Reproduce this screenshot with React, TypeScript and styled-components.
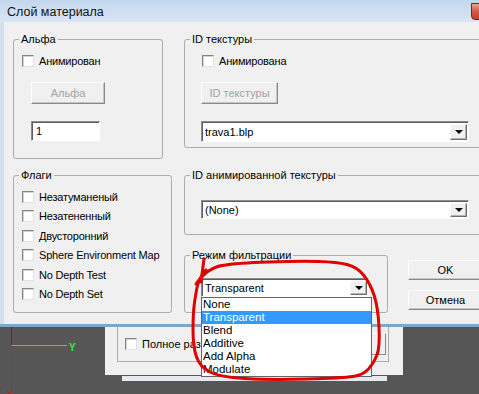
import React from "react";
import styled, { createGlobalStyle } from "styled-components";

const GlobalStyle = createGlobalStyle`
  html, body {
    margin: 0;
    padding: 0;
  }
  body {
    background: #565656;
    font-family: "Liberation Sans", Arial, sans-serif;
    font-size: 11px;
    color: #000;
  }
`;

const Screen = styled.div`
  position: relative;
  width: 479px;
  height: 394px;
  overflow: hidden;
  background: #565656;
`;

const Window = styled.div`
  width: 520px;
  background: #f0f0f0;
  border-bottom: 3px solid #7ea8c8;
`;

const TitleBar = styled.header`
  display: flex;
  align-items: flex-start;
  height: 22px;
  background: linear-gradient(#c2d7ed, #d9e7f5);
  color: #111;
`;

const Title = styled.h1`
  margin: 0;
  padding: 5px 0 0 7px;
  font-size: 12.5px;
  font-weight: normal;
  line-height: 15px;
`;

const CloseButton = styled.button`
  margin: 3px 6px 0 auto;
  width: 43px;
  height: 17px;
  padding: 0;
  border: 1px solid #6d2a22;
  border-radius: 0 0 4px 4px;
  background: linear-gradient(#eaa594, #d05a46 50%, #c23f2d);
`;

const Body = styled.main`
  box-sizing: border-box;
  display: flex;
  height: 302px;
  padding: 11px 0 0 9px;
  border-left: 4px solid #d3e1ef;
`;

const LeftColumn = styled.div`
  display: flex;
  flex-direction: column;
  gap: 10px;
  width: 159px;
`;

const RightColumn = styled.div`
  display: flex;
  flex-direction: column;
  width: 300px;
  margin-left: 12px;
`;

const Group = styled.fieldset<{ $w: number; $h: number; $pl: number; $mt?: number }>`
  box-sizing: border-box;
  display: flex;
  flex-direction: column;
  align-items: flex-start;
  width: ${(p) => p.$w}px;
  height: ${(p) => p.$h}px;
  min-width: 0;
  margin: ${(p) => p.$mt ?? 0}px 0 0 0;
  padding: 0 8px 0 ${(p) => p.$pl}px;
  border: 1px solid #adadad;
  border-radius: 3px;
`;

const Legend = styled.legend<{ $pl: number }>`
  margin-left: ${(p) => 5 - p.$pl}px;
  padding: 0 2px;
  font-size: 11px;
  line-height: 13px;
`;

const CheckRow = styled.label<{ $mt?: number; $ml?: number }>`
  display: flex;
  align-items: center;
  gap: 5px;
  height: 13px;
  margin: ${(p) => p.$mt ?? 0}px 0 0 ${(p) => p.$ml ?? 0}px;
  white-space: nowrap;
  font-size: 11px;
  letter-spacing: -0.2px;
`;

const Box = styled.span`
  box-sizing: border-box;
  flex: none;
  width: 12px;
  height: 12px;
  background: #fff;
  border: 1px solid;
  border-color: #848484 #e2e2e2 #e2e2e2 #848484;
  box-shadow: inset 1px 1px 0 #d4d4d4;
`;

const FlagList = styled.div`
  display: flex;
  flex-direction: column;
  gap: 6.4px;
  margin-top: 8.5px;
`;

const PushButton = styled.button<{ $w: number; $h: number; $mt?: number; $ml?: number; $disabled?: boolean }>`
  box-sizing: border-box;
  width: ${(p) => p.$w}px;
  height: ${(p) => p.$h}px;
  margin: ${(p) => p.$mt ?? 0}px 0 0 ${(p) => p.$ml ?? 0}px;
  padding: 0;
  background: #f0f0f0;
  border: 1px solid;
  border-color: #fdfdfd #8a8a8a #8a8a8a #fdfdfd;
  box-shadow: inset -1px -1px 0 #c6c6c6;
  font-family: "Liberation Sans", Arial, sans-serif;
  font-size: 11px;
  color: ${(p) => (p.$disabled ? "#a3a3a3" : "#000")};
`;

const TextField = styled.div<{ $w: number; $mt?: number; $ml?: number }>`
  box-sizing: border-box;
  width: ${(p) => p.$w}px;
  height: 20px;
  margin: ${(p) => p.$mt ?? 0}px 0 0 ${(p) => p.$ml ?? 0}px;
  padding: 2px 0 0 4px;
  background: #fff;
  border: 1px solid;
  border-color: #8c8c8c #fff #fff #8c8c8c;
  box-shadow: inset 1px 1px 0 #5e5e5e;
  font-size: 11px;
  line-height: 14px;
`;

const SelectWrap = styled.div<{ $mt: number }>`
  position: relative;
  margin-top: ${(p) => p.$mt}px;
`;

const Select = styled.div<{ $w: number; $h: number }>`
  box-sizing: border-box;
  display: flex;
  align-items: center;
  width: ${(p) => p.$w}px;
  height: ${(p) => p.$h}px;
  padding: 0 1px 0 0;
  background: #fff;
  border: 1px solid;
  border-color: #8c8c8c #fff #fff #8c8c8c;
  box-shadow: inset 1px 1px 0 #5e5e5e;
  font-size: 11px;
`;

const SelectValue = styled.span`
  flex: 1;
  padding-left: 3px;
  white-space: nowrap;
`;

const Arrow = styled.span`
  box-sizing: border-box;
  display: flex;
  align-items: center;
  justify-content: center;
  width: 17px;
  height: calc(100% - 3px);
  margin-top: 1px;
  background: #f0f0f0;
  border: 1px solid;
  border-color: #fdfdfd #6e6e6e #6e6e6e #fdfdfd;
  box-shadow: inset -1px -1px 0 #b4b4b4;
  &::after {
    content: "";
    border-left: 4px solid transparent;
    border-right: 4px solid transparent;
    border-top: 4px solid #000;
  }
`;

const DropList = styled.ul`
  position: absolute;
  top: 100%;
  left: 0;
  z-index: 5;
  box-sizing: border-box;
  width: 171px;
  margin: 0;
  padding: 0;
  list-style: none;
  background: #fff;
  border: 1px solid #646464;
`;

const DropItem = styled.li<{ $active?: boolean }>`
  height: 13px;
  padding-left: 1px;
  font-size: 11.5px;
  line-height: 13px;
  background: ${(p) => (p.$active ? "#3399ff" : "#fff")};
  color: ${(p) => (p.$active ? "#fff" : "#000")};
`;

const BottomRow = styled.div`
  display: flex;
  margin-top: 14px;
`;

const ButtonColumn = styled.div`
  display: flex;
  flex-direction: column;
  gap: 10px;
  margin: 11px 0 0 20px;
`;

const Viewport = styled.section`
  display: flex;
  height: 67px;
  background: #565656;
`;

const BackWindow = styled.div`
  display: flex;
  flex-direction: column;
  width: 298px;
`;

const BackPanel = styled.div`
  box-sizing: border-box;
  height: 48px;
  padding-left: 12px;
  background: #f0f0f0;
`;

const BackGroup = styled.div`
  box-sizing: border-box;
  display: flex;
  align-items: center;
  gap: 5px;
  width: 272px;
  height: 35px;
  padding: 0 2px 0 7px;
  border: 1px solid #adadad;
  border-top: none;
  font-size: 11px;
  white-space: nowrap;
`;

const BackButton = styled.span`
  box-sizing: border-box;
  flex: none;
  width: 86px;
  height: 22px;
  margin-left: auto;
  background: #f0f0f0;
  border: 1px solid;
  border-color: #fdfdfd #8a8a8a #8a8a8a #fdfdfd;
`;

const BackStrip = styled.div`
  width: 265px;
  height: 5px;
  margin: 1px 0 0 17px;
  background: #e6eaee;
`;

const Marker = styled.svg`
  position: absolute;
  inset: 0;
  z-index: 10;
  pointer-events: none;
`;

const loop: [number, number][] = [
  [196, 284], [207, 268], [237, 263], [300, 261], [337, 262], [357, 267],
  [370, 283], [378, 307], [380, 347], [374, 363], [363, 375], [343, 378],
  [270, 380], [220, 377], [200, 367], [193, 347], [193, 313], [196, 292],
  [199, 279], [206, 270],
];

function smoothPath(pts: [number, number][]) {
  let d = `M ${pts[0][0]} ${pts[0][1]}`;
  for (let i = 1; i < pts.length - 1; i++) {
    const mx = (pts[i][0] + pts[i + 1][0]) / 2;
    const my = (pts[i][1] + pts[i + 1][1]) / 2;
    d += ` Q ${pts[i][0]} ${pts[i][1]} ${mx} ${my}`;
  }
  const last = pts[pts.length - 1];
  return d + ` L ${last[0]} ${last[1]}`;
}

const flags = [
  "Незатуманеный",
  "Незатененный",
  "Двусторонний",
  "Sphere Environment Map",
  "No Depth Test",
  "No Depth Set",
];

const filterModes = ["None", "Transparent", "Blend", "Additive", "Add Alpha", "Modulate"];

export default function App() {
  return (
    <>
      <GlobalStyle />
      <Screen>
        <Window>
          <TitleBar>
            <Title>Слой материала</Title>
            <CloseButton aria-label="Закрыть" />
          </TitleBar>
          <Body>
            <LeftColumn>
              <Group $w={150} $h={126} $pl={8}>
                <Legend $pl={8}>Альфа</Legend>
                <CheckRow $mt={8}>
                  <Box />
                  Анимирован
                </CheckRow>
                <PushButton $w={74} $h={22} $mt={15} $ml={9} $disabled>
                  Альфа
                </PushButton>
                <TextField $w={69} $mt={17} $ml={9}>
                  1
                </TextField>
              </Group>
              <Group $w={159} $h={144} $pl={8}>
                <Legend $pl={8}>Флаги</Legend>
                <FlagList>
                  {flags.map((f) => (
                    <CheckRow key={f}>
                      <Box />
                      {f}
                    </CheckRow>
                  ))}
                </FlagList>
              </Group>
            </LeftColumn>

            <RightColumn>
              <Group $w={300} $h={115} $pl={16}>
                <Legend $pl={16}>ID текстуры</Legend>
                <CheckRow $mt={8} $ml={1}>
                  <Box />
                  Анимирована
                </CheckRow>
                <PushButton $w={77} $h={22} $mt={15} $disabled>
                  ID текстуры
                </PushButton>
                <SelectWrap $mt={17}>
                  <Select $w={268} $h={21}>
                    <SelectValue>trava1.blp</SelectValue>
                    <Arrow />
                  </Select>
                </SelectWrap>
              </Group>

              <Group $w={300} $h={66} $pl={16} $mt={21}>
                <Legend $pl={16}>ID анимированной текстуры</Legend>
                <SelectWrap $mt={18}>
                  <Select $w={268} $h={19}>
                    <SelectValue>(None)</SelectValue>
                    <Arrow />
                  </Select>
                </SelectWrap>
              </Group>

              <BottomRow>
                <Group $w={204} $h={64} $pl={16}>
                  <Legend $pl={16}>Режим фильтрации</Legend>
                  <SelectWrap $mt={16}>
                    <Select $w={168} $h={19}>
                      <SelectValue>Transparent</SelectValue>
                      <Arrow />
                    </Select>
                    <DropList>
                      {filterModes.map((m) => (
                        <DropItem key={m} $active={m === "Transparent"}>
                          {m}
                        </DropItem>
                      ))}
                    </DropList>
                  </SelectWrap>
                </Group>
                <ButtonColumn>
                  <PushButton $w={75} $h={20}>
                    OK
                  </PushButton>
                  <PushButton $w={75} $h={20}>
                    Отмена
                  </PushButton>
                </ButtonColumn>
              </BottomRow>
            </RightColumn>
          </Body>
        </Window>

        <Viewport>
          <svg width="105" height="67" viewBox="0 0 105 67">
            <line x1="11.5" y1="0" x2="11.5" y2="18" stroke="#2b2bd0" strokeWidth="1" />
            <line x1="11.5" y1="18.5" x2="67" y2="18.5" stroke="#33e033" strokeWidth="1" />
            <line x1="11.5" y1="19" x2="11.5" y2="62" stroke="#c42424" strokeWidth="1" />
            <text x="69" y="24" fill="#33e033" fontSize="11" fontWeight="bold" fontFamily="'DejaVu Sans Mono', monospace">
              Y
            </text>
            <text x="7" y="72" fill="#c42424" fontSize="11" fontWeight="bold" fontFamily="'DejaVu Sans Mono', monospace">
              X
            </text>
          </svg>
          <BackWindow>
            <BackPanel>
              <BackGroup>
                <Box />
                Полное раз
                <BackButton />
              </BackGroup>
            </BackPanel>
            <BackStrip />
          </BackWindow>
        </Viewport>

        <Marker width="479" height="394" viewBox="0 0 479 394">
          <path d={smoothPath(loop)} fill="none" stroke="#e00000" strokeWidth="3" strokeLinecap="round" strokeLinejoin="round" />
          <path d="M 204 259 L 201 282" fill="none" stroke="#e00000" strokeWidth="3" strokeLinecap="round" />
        </Marker>
      </Screen>
    </>
  );
}
